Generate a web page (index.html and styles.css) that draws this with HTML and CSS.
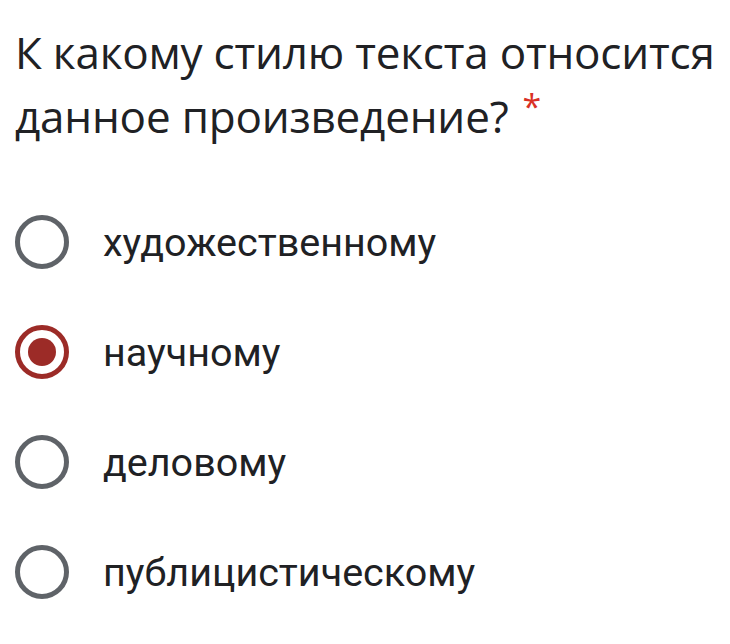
FILE: index.html
```html
<!DOCTYPE html>
<html lang="ru">
<head>
<meta charset="utf-8">
<link rel="stylesheet" href="styles.css">
</head>
<body>
<div class="question">
  <div class="title">К какому стилю текста относится данное произведение?<span class="req">*</span></div>
  <div class="options">
    <div class="option"><span class="radio"></span><span class="label">художественному</span></div>
    <div class="option"><span class="radio checked"></span><span class="label">научному</span></div>
    <div class="option"><span class="radio"></span><span class="label">деловому</span></div>
    <div class="option"><span class="radio"></span><span class="label">публицистическому</span></div>
  </div>
</div>
</body>
</html>
```
FILE: styles.css
```css
html, body { margin: 0; padding: 0; background: #fff; }
body { width: 730px; height: 644px; overflow: hidden; }
.question { padding: 20px 0 0 15px; }
.title {
  font-family: "Open Sans", "Noto Sans", sans-serif;
  font-size: 44px;
  line-height: 64px;
  color: #202124;
  letter-spacing: -0.2px;
}
.req { display: inline-block; color: #d93025; font-size: 34px; line-height: 30px; vertical-align: 14px; margin-left: 14px; }
.options { display: flex; flex-direction: column; gap: 56px; margin-top: 67px; }
.option { display: flex; align-items: center; height: 54px; }
.radio {
  box-sizing: border-box;
  width: 54px; height: 54px;
  border: 5.5px solid #5f6368;
  border-radius: 50%;
  flex: none;
  display: flex; align-items: center; justify-content: center;
}
.radio.checked { border-color: #9c2b27; }
.radio.checked::after {
  content: ""; width: 28px; height: 28px; border-radius: 50%; background: #9c2b27;
}
.label {
  margin-left: 34px;
  font-family: Roboto, sans-serif;
  font-size: 39.5px;
  color: #202124;
}
```
